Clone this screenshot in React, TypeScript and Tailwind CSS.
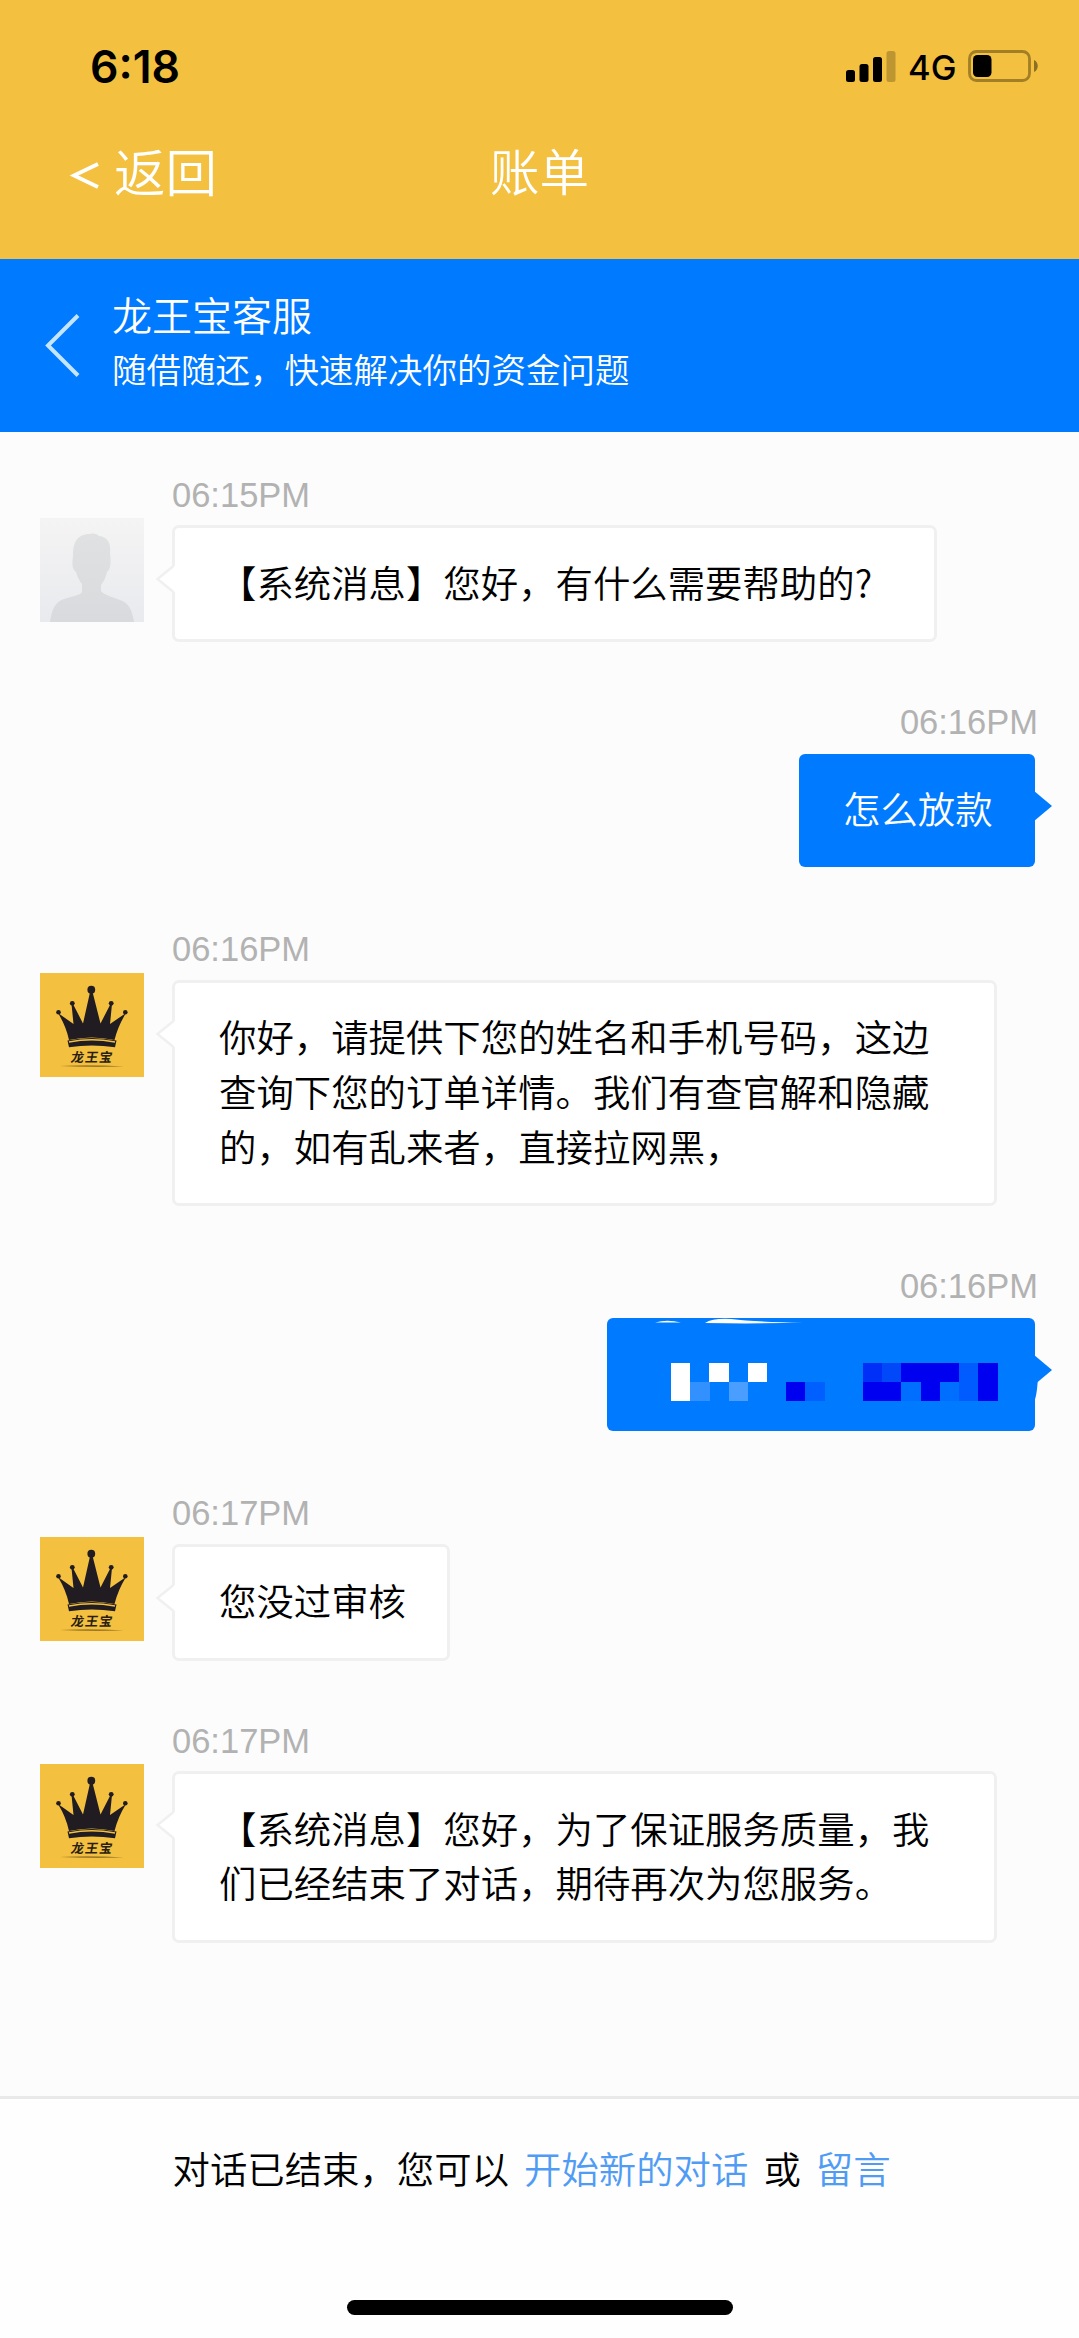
import type { ReactNode } from 'react'

type Message = {
    id: number;
    from: 'guest' | 'agent' | 'me';
    time: string;
    text?: string;
    width: string;
}

const messages: Message[] = [
    { id: 1, from: 'guest', time: '06:15PM', text: '【系统消息】您好，有什么需要帮助的?', width: 'w-[765px]' },
    { id: 2, from: 'me', time: '06:16PM', text: '怎么放款', width: 'w-[236px]' },
    { id: 3, from: 'agent', time: '06:16PM', text: '你好，请提供下您的姓名和手机号码，这边查询下您的订单详情。我们有查官解和隐藏的，如有乱来者，直接拉网黑，', width: 'w-[825px]' },
    { id: 4, from: 'me', time: '06:16PM', width: 'w-[428px]' },
    { id: 5, from: 'agent', time: '06:17PM', text: '您没过审核', width: 'w-[278px]' },
    { id: 6, from: 'agent', time: '06:17PM', text: '【系统消息】您好，为了保证服务质量，我们已经结束了对话，期待再次为您服务。', width: 'w-[825px]' },
];

// [column, row, colour] of each censored block
const blocks: [number, number, string][] = [
    [0, 0, '#ffffff'], [2, 0, '#ffffff'], [4, 0, '#ffffff'],
    [10, 0, '#0030f8'], [11, 0, '#0048f8'], [12, 0, '#0000f0'], [13, 0, '#0000f0'], [14, 0, '#0000f0'], [15, 0, '#005cff'], [16, 0, '#0000f0'],
    [0, 1, '#ffffff'], [1, 1, '#3391ff'], [3, 1, '#4a9eff'], [6, 1, '#0000f0'], [7, 1, '#0060ff'],
    [10, 1, '#0000f0'], [11, 1, '#0000f0'], [12, 1, '#006eff'], [13, 1, '#0000f0'], [14, 1, '#006eff'], [15, 1, '#005cff'], [16, 1, '#0000f0'],
];

function StatusBar() {
    return (
        <div className="flex h-[116px] items-start justify-between pt-[38px] pr-[40px] pl-[90px]">
            <span className="pt-px font-['Inter',sans-serif] text-[44.5px] leading-[56px] font-semibold text-black">6:18</span>
            <div className="flex pt-[12px]">
                <svg width="50" height="32" viewBox="0 0 50 32">
                    <rect x="0" y="20" width="9" height="12" rx="2.5" />
                    <rect x="13.5" y="14" width="9" height="18" rx="2.5" />
                    <rect x="27" y="7" width="9" height="25" rx="2.5" />
                    <rect x="40.5" y="1" width="9" height="31" rx="2.5" opacity="0.22" />
                </svg>
                <span className="ml-[12px] w-[60px] font-['Inter',sans-serif] text-[34.5px] leading-[36px] font-[450] text-black">4G</span>
                <svg width="71" height="32" viewBox="0 0 71 32">
                    <rect x="1.5" y="1.5" width="60" height="29" rx="7" fill="none" stroke="#a27f26" strokeWidth="2.8" />
                    <rect x="5" y="5" width="18.5" height="22" rx="4.5" />
                    <path d="M66 10c5 2 5 10 0 12z" fill="#8d6f24" />
                </svg>
            </div>
        </div>
    );
}

function GuestAvatar() {
    return (
        <svg width="104" height="104" viewBox="0 0 104 104">
            <defs>
                <linearGradient id="guestBg" x1="0" y1="0" x2="0" y2="1">
                    <stop offset="0" stopColor="#f4f4f4" />
                    <stop offset="1" stopColor="#e9eaee" />
                </linearGradient>
                <linearGradient id="guestBody" x1="0" y1="0" x2="0" y2="1">
                    <stop offset="0" stopColor="#dfe1e2" />
                    <stop offset="1" stopColor="#d8dadd" />
                </linearGradient>
            </defs>
            <rect width="104" height="104" fill="url(#guestBg)" />
            <path d="M10 104C12 91 15 84 24 81C33 78 41 77 42 74V66C38 61 37 57 36 54C32 51 32 46 33 38C33 26 36 16 50 16C54 15 57 16 59 18C68 19 71 25 70 35C71 44 71 51 67 54C66 59 64 63 61 67V73C64 77 73 79 80 82C89 85 92 92 94 104Z" fill="url(#guestBody)" />
        </svg>
    );
}

function CrownAvatar() {
    return (
        <svg width="104" height="104" viewBox="0 0 104 104">
            <rect width="104" height="104" fill="#f3c040" />
            <g fill="#211c22">
                <circle cx="51.3" cy="16.7" r="3.9" />
                <circle cx="32.3" cy="30.3" r="2.4" />
                <circle cx="71.2" cy="30.3" r="2.4" />
                <circle cx="18.5" cy="39.3" r="2.3" />
                <circle cx="85.3" cy="39.3" r="2.3" />
                <path d="M18 40L33.5 51L31.5 31H33L43 50.5L50.3 18H52.3L60.5 50.5L70.5 31H72L70 51L86 40Q78 53 74.5 67Q51.5 62 29 67Q26 53 18 40Z" />
                <path d="M27.5 67.5Q51.5 62.5 76.5 67.5L75 74.3Q51.5 70.5 29 74.3Z" />
            </g>
            <path d="M29 69Q51.5 64.5 75 69" fill="none" stroke="#f3c040" strokeWidth="1.5" />
            <text x="30.5" y="89.5" fontSize="13" letterSpacing="1.2" transform="translate(15.5 0) skewX(-10)" fill="#2a1d12" className="font-['Noto_Sans_CJK_SC',sans-serif] font-bold">龙王宝</text>
            <path d="M20 93Q51 91.5 84 93.5Q51 94.5 20 93Z" fill="#9d7927" />
        </svg>
    );
}

function CensoredContent() {
    return (
        <svg className="absolute inset-0" width="431" height="113" viewBox="0 0 431 113">
            <path d="M48 4.5Q60 1 74 4.5ZM98 5Q106 0 124 1Q148 4 196 4.5Q150 6 98 5Z" fill="#ffffff" />
            <path d="M428 50H431Q431 75 427 84Z" fill="#007aff" />
            {blocks.map(([col, row, color]) => (
                <rect key={`${col}-${row}`} x={64 + col * 19.2} y={44.6 + row * 19} width="19.4" height="19.2" fill={color} shapeRendering="crispEdges" />
            ))}
        </svg>
    );
}

function Time({ children }: { children: ReactNode }) {
    return (
        <div className="h-[40px] font-['Liberation_Sans',sans-serif] text-[34.5px] leading-[40px] font-normal text-[#b2b2b2]">{children}</div>
    );
}

function MyMessage({ message }: { message: Message }) {
    return (
        <div className="flex flex-col items-end pr-[44px]">
            <div className="-mr-[3px]"><Time>{message.time}</Time></div>
            <div className={`relative mt-[12.5px] mb-[1.8px] h-[113px] rounded-[6px] bg-[#007aff] pt-[27px] pl-[44px] text-white ${message.width}`}>
                {message.text ?? <CensoredContent />}
                <svg className="absolute top-[37px] left-full" width="18" height="30" viewBox="0 0 18 30">
                    <path d="M-1 0L17 15L-1 30Z" fill="#007aff" />
                </svg>
            </div>
        </div>
    );
}

function TheirMessage({ message }: { message: Message }) {
    return (
        <div className="flex items-start gap-[28px] pl-[40px]">
            <div className="mt-[43.5px]">
                {message.from === 'guest' ? <GuestAvatar /> : <CrownAvatar />}
            </div>
            <div>
                <Time>{message.time}</Time>
                <div className={`relative mt-[10.5px] rounded-[7px] border-[3px] border-[#f0f0f0] bg-white pt-[26.5px] pr-[40px] pb-[29.5px] pl-[44px] text-black ${message.width}`}>
                    {message.text}
                    <svg className="absolute top-[35px] -left-[20px]" width="21" height="32" viewBox="0 0 21 32">
                        <path d="M21 2L2.5 16L21 30Z" fill="#ffffff" />
                        <path d="M18.5 3L2.5 16L18.5 29" fill="none" stroke="#f0f0f0" strokeWidth="2.5" />
                    </svg>
                </div>
            </div>
        </div>
    );
}

export default function App() {
    return (
        <div className="flex h-[2338px] w-[1079px] flex-col overflow-hidden bg-[#fcfcfc] font-['Noto_Sans_CJK_SC',sans-serif] font-[350]">
            <header className="h-[259px] shrink-0 bg-[#f3c040]">
                <StatusBar />
                <div className="-mt-[2px] grid grid-cols-3 items-center text-white">
                    <button className="flex items-center pl-[69px] text-[51.5px] leading-[112px]">
                        <svg className="mt-[9px]" width="32" height="30" viewBox="0 0 32 30">
                            <path d="M29 4L5 15.5L29 27" fill="none" stroke="currentColor" strokeWidth="3.8" />
                        </svg>
                        <span className="ml-[13px] h-[112px] whitespace-nowrap">返回</span>
                    </button>
                    <h1 className="text-center text-[49.5px] leading-[112px]">账单</h1>
                </div>
            </header>

            <div className="flex h-[173px] shrink-0 items-center bg-[#007aff] text-white">
                <svg className="ml-[44px]" width="37" height="64" viewBox="0 0 37 64">
                    <path d="M34 1.5L4 31.5L34 61.5" fill="none" stroke="#c5e5ff" strokeWidth="4" />
                </svg>
                <div className="ml-[31px] pb-[11px]">
                    <h2 className="text-[40px] leading-[56px]">龙王宝客服</h2>
                    <p className="text-[34.5px] leading-[52px]">随借随还，快速解决你的资金问题</p>
                </div>
            </div>

            <main className="flex grow flex-col gap-[60px] pt-[42.5px] text-[37.4px] leading-[54.8px]">
                {messages.map((message) => message.from === 'me'
                    ? <MyMessage key={message.id} message={message} />
                    : <TheirMessage key={message.id} message={message} />
                )}
            </main>

            <footer className="flex h-[242px] shrink-0 flex-col items-center justify-between border-t-[3px] border-[#e9e9e9] bg-[#fefefe] pb-[23px]">
                <p className="flex w-[734px] gap-[15px] pt-[41px] text-[37.4px] leading-[56px] whitespace-nowrap text-black">
                    <span>对话已结束，您可以</span>
                    <a className="text-[#509cf5]">开始新的对话</a>
                    <span>或</span>
                    <a className="text-[#509cf5]">留言</a>
                </p>
                <div className="h-[15px] w-[386px] rounded-full bg-black" />
            </footer>
        </div>
    );
}
